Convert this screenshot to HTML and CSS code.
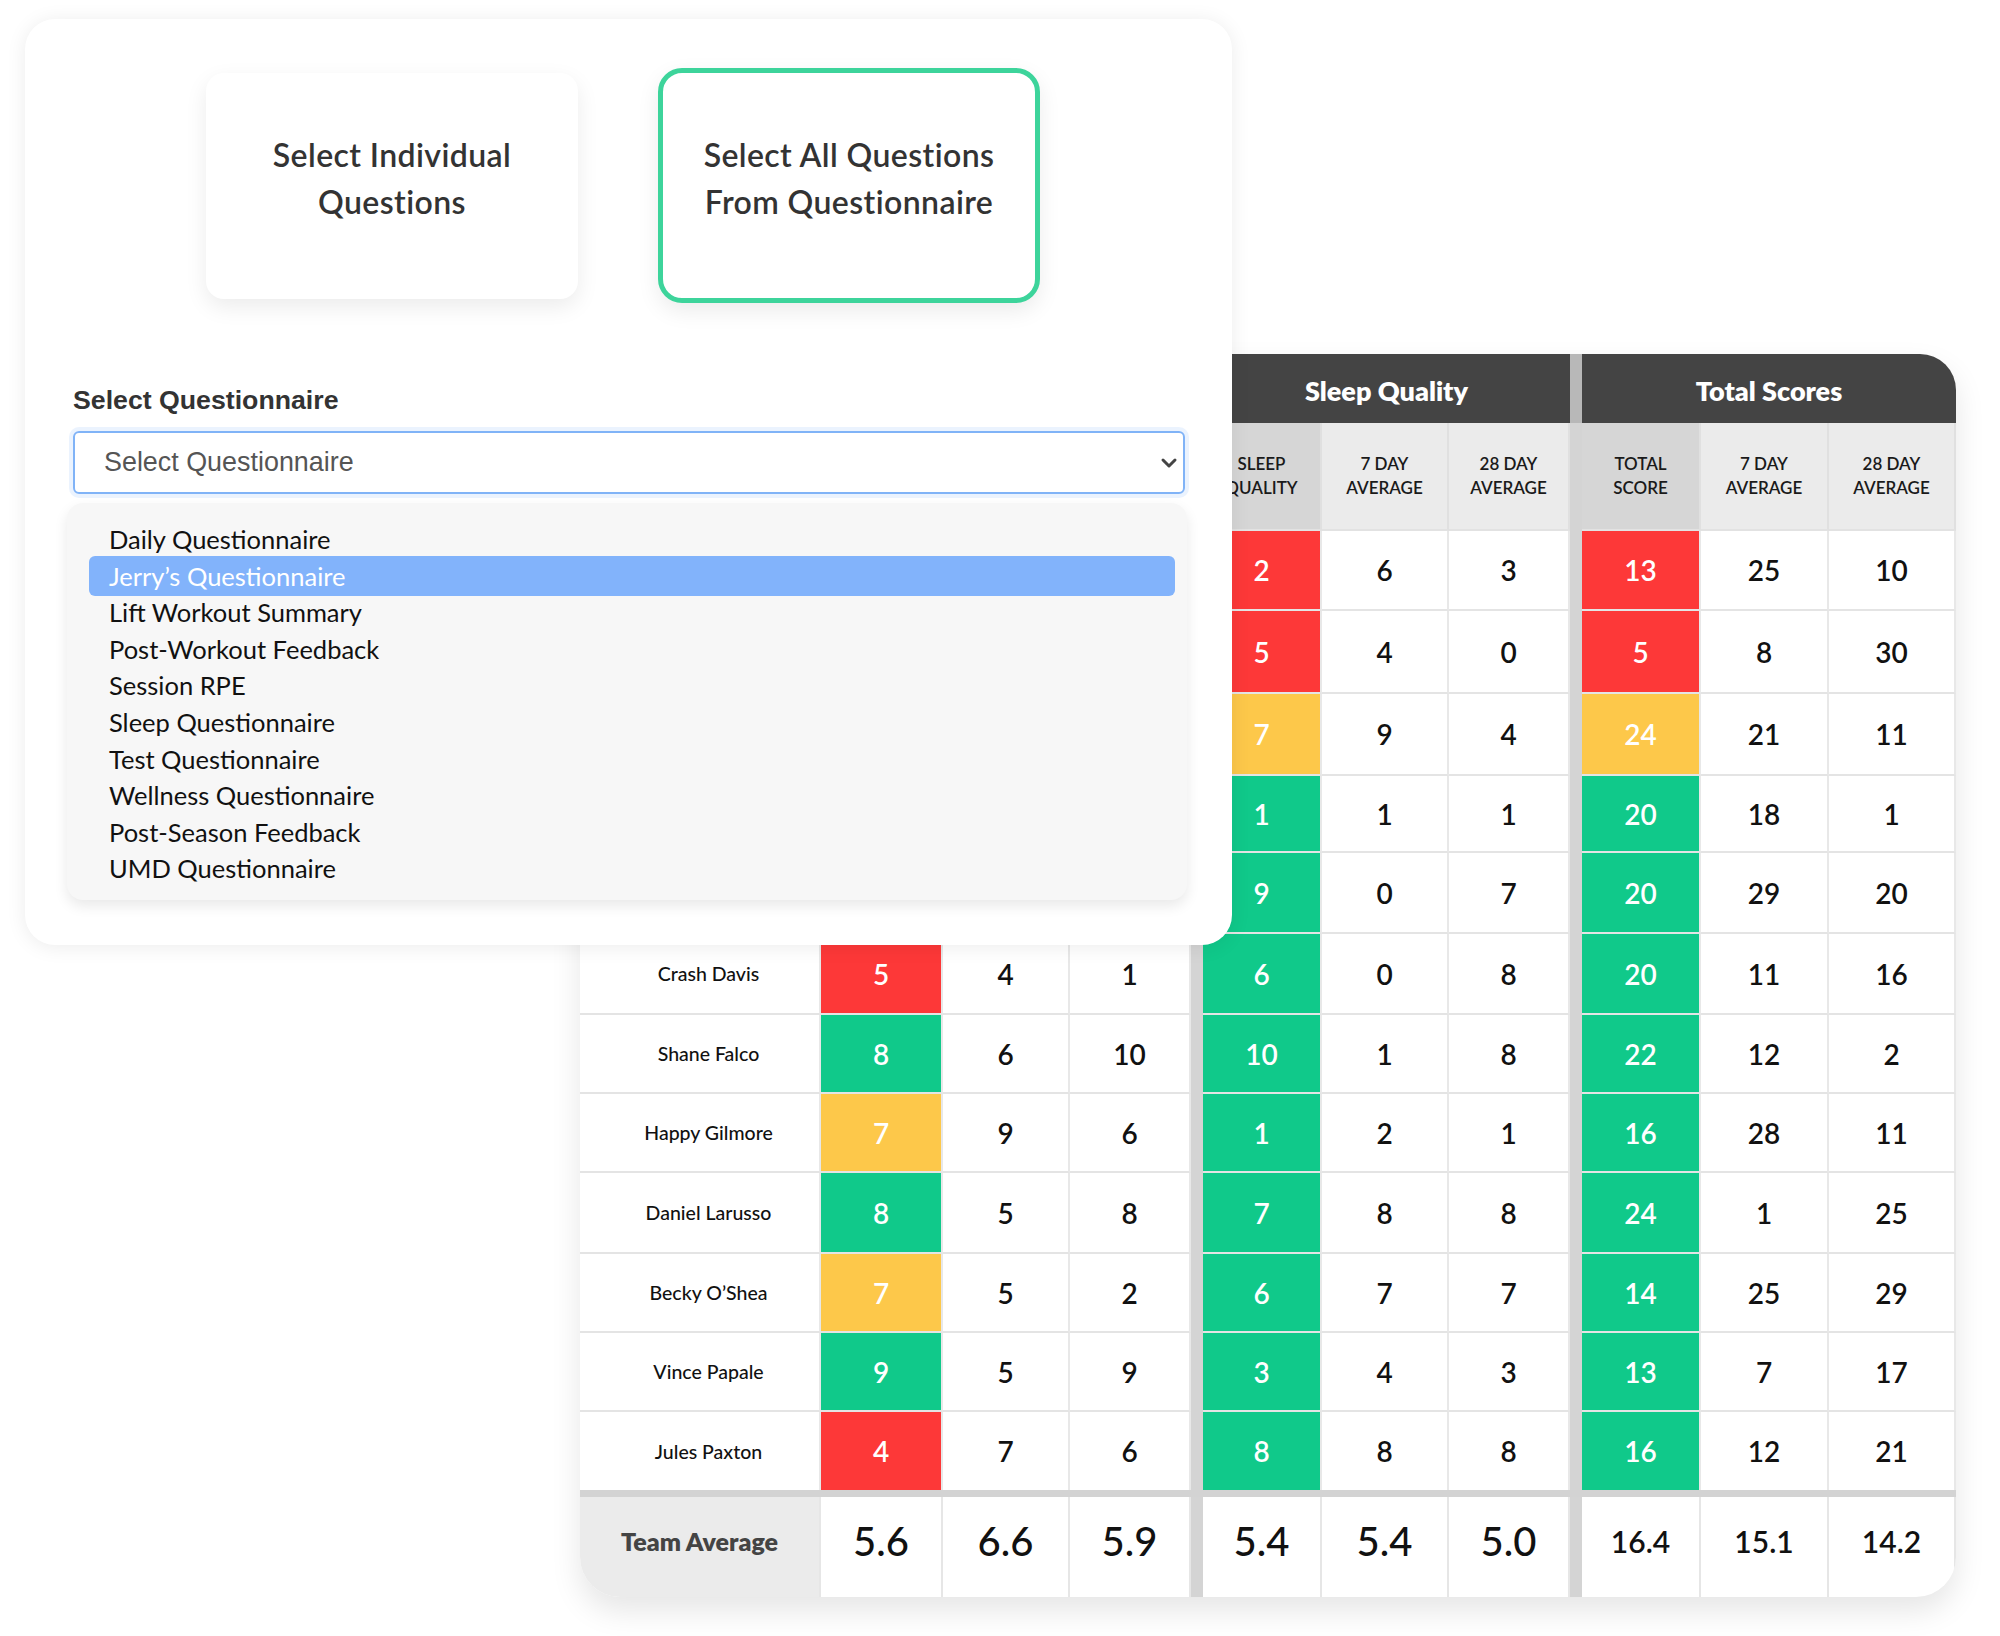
FILE: index.html
```html
<!DOCTYPE html>
<html>
<head>
<meta charset="utf-8">
<title>Questionnaire Report</title>
<link rel="stylesheet" href="styles.css">
</head>
<body>
<div class="stage">
  <div class="card">
    <div class="choices">
      <div class="choice">Select Individual<br>Questions</div>
      <div class="choice active">Select All Questions<br>From Questionnaire</div>
    </div>
    <div class="field-label">Select Questionnaire</div>
    <div class="select">
      <span>Select Questionnaire</span>
      <svg class="chev" width="18" height="12" viewBox="0 0 18 12"><path d="M3 3 L9 9 L15 3" fill="none" stroke="#444" stroke-width="3" stroke-linecap="round" stroke-linejoin="round"/></svg>
    </div>
    <ul class="options">
      <li>Daily Questionnaire</li>
      <li class="sel">Jerry’s Questionnaire</li>
      <li>Lift Workout Summary</li>
      <li>Post-Workout Feedback</li>
      <li>Session RPE</li>
      <li>Sleep Questionnaire</li>
      <li>Test Questionnaire</li>
      <li>Wellness Questionnaire</li>
      <li>Post-Season Feedback</li>
      <li>UMD Questionnaire</li>
    </ul>
  </div>

  <div class="board">
    <div class="hd"></div>
    <div class="hd span3">Readiness</div>
    <div class="sep hsep"></div>
    <div class="hd span3">Sleep Quality</div>
    <div class="sep hsep"></div>
    <div class="hd span3">Total Scores</div>

    <div class="sh">Athlete</div>
    <div class="sh first">Readiness<br>Score</div>
    <div class="sh">7 Day<br>Average</div>
    <div class="sh">28 Day<br>Average</div>
    <div class="sep"></div>
    <div class="sh first">Sleep<br>Quality</div>
    <div class="sh">7 Day<br>Average</div>
    <div class="sh">28 Day<br>Average</div>
    <div class="sep"></div>
    <div class="sh first">Total<br>Score</div>
    <div class="sh">7 Day<br>Average</div>
    <div class="sh">28 Day<br>Average</div>

    <div class="c nm">Rocky Balboa</div><div class="c y">6</div><div class="c">5</div><div class="c">7</div><div class="sep"></div><div class="c r">2</div><div class="c">6</div><div class="c">3</div><div class="sep"></div><div class="c r">13</div><div class="c">25</div><div class="c">10</div>
    <div class="c nm">Bobby Boucher</div><div class="c r">3</div><div class="c">8</div><div class="c">4</div><div class="sep"></div><div class="c r">5</div><div class="c">4</div><div class="c">0</div><div class="sep"></div><div class="c r">5</div><div class="c">8</div><div class="c">30</div>
    <div class="c nm">Roy Hobbs</div><div class="c g">9</div><div class="c">2</div><div class="c">5</div><div class="sep"></div><div class="c y">7</div><div class="c">9</div><div class="c">4</div><div class="sep"></div><div class="c y">24</div><div class="c">21</div><div class="c">11</div>
    <div class="c nm">Benny Rodriguez</div><div class="c g">8</div><div class="c">6</div><div class="c">3</div><div class="sep"></div><div class="c g">1</div><div class="c">1</div><div class="c">1</div><div class="sep"></div><div class="c g">20</div><div class="c">18</div><div class="c">1</div>
    <div class="c nm">Jimmy Chitwood</div><div class="c y">7</div><div class="c">4</div><div class="c">9</div><div class="sep"></div><div class="c g">9</div><div class="c">0</div><div class="c">7</div><div class="sep"></div><div class="c g">20</div><div class="c">29</div><div class="c">20</div>
    <div class="c nm">Crash Davis</div><div class="c r">5</div><div class="c">4</div><div class="c">1</div><div class="sep"></div><div class="c g">6</div><div class="c">0</div><div class="c">8</div><div class="sep"></div><div class="c g">20</div><div class="c">11</div><div class="c">16</div>
    <div class="c nm">Shane Falco</div><div class="c g">8</div><div class="c">6</div><div class="c">10</div><div class="sep"></div><div class="c g">10</div><div class="c">1</div><div class="c">8</div><div class="sep"></div><div class="c g">22</div><div class="c">12</div><div class="c">2</div>
    <div class="c nm">Happy Gilmore</div><div class="c y">7</div><div class="c">9</div><div class="c">6</div><div class="sep"></div><div class="c g">1</div><div class="c">2</div><div class="c">1</div><div class="sep"></div><div class="c g">16</div><div class="c">28</div><div class="c">11</div>
    <div class="c nm">Daniel Larusso</div><div class="c g">8</div><div class="c">5</div><div class="c">8</div><div class="sep"></div><div class="c g">7</div><div class="c">8</div><div class="c">8</div><div class="sep"></div><div class="c g">24</div><div class="c">1</div><div class="c">25</div>
    <div class="c nm">Becky O’Shea</div><div class="c y">7</div><div class="c">5</div><div class="c">2</div><div class="sep"></div><div class="c g">6</div><div class="c">7</div><div class="c">7</div><div class="sep"></div><div class="c g">14</div><div class="c">25</div><div class="c">29</div>
    <div class="c nm">Vince Papale</div><div class="c g">9</div><div class="c">5</div><div class="c">9</div><div class="sep"></div><div class="c g">3</div><div class="c">4</div><div class="c">3</div><div class="sep"></div><div class="c g">13</div><div class="c">7</div><div class="c">17</div>
    <div class="c nm last">Jules Paxton</div><div class="c r last">4</div><div class="c last">7</div><div class="c last">6</div><div class="sep"></div><div class="c g last">8</div><div class="c last">8</div><div class="c last">8</div><div class="sep"></div><div class="c g last">16</div><div class="c last">12</div><div class="c last">21</div>

    <div class="rule"></div>

    <div class="ft nm">Team Average</div>
    <div class="ft">5.6</div><div class="ft">6.6</div><div class="ft">5.9</div>
    <div class="sep"></div>
    <div class="ft">5.4</div><div class="ft">5.4</div><div class="ft">5.0</div>
    <div class="sep"></div>
    <div class="ft sm">16.4</div><div class="ft sm">15.1</div><div class="ft sm">14.2</div>
  </div>
</div>
</body>
</html>
```
FILE: styles.css
```css
* { box-sizing: border-box; margin: 0; padding: 0; }
html, body { background: #fff; }
body {
  font-family: Lato, "Noto Sans", sans-serif;
  width: 2000px;
  height: 1636px;
  overflow: hidden;
}
.stage {
  position: relative;
  height: 1636px;
  padding: 354px 0 0 580px;
}

/* ---------- top card ---------- */
.card {
  position: absolute;
  left: 25px;
  top: 19px;
  width: 1207px;
  height: 926px;
  background: #fff;
  border-radius: 30px;
  box-shadow: 0 2px 20px rgba(0, 0, 0, 0.08);
  z-index: 2;
  padding: 49px 0 0 48px;
}
.choices {
  display: flex;
  align-items: center;
  gap: 80px;
  height: 235px;
  padding-left: 133px;
}
.choice {
  width: 372px;
  height: 226px;
  border-radius: 18px;
  background: #fff;
  box-shadow: 0 8px 22px rgba(0, 0, 0, 0.08);
  display: flex;
  align-items: center;
  justify-content: center;
  text-align: center;
  padding-bottom: 15px;
  font-size: 32px;
  letter-spacing: 0.4px;
  line-height: 47px;
  font-weight: 600;
  color: #333;
}
.choice.active {
  width: 382px;
  height: 235px;
  border: 5px solid #3dd49b;
  border-radius: 24px;
}
.field-label {
  margin-top: 81px;
  font-family: "Liberation Sans", Arial, sans-serif;
  font-weight: 700;
  font-size: 26.7px;
  line-height: 32px;
  color: #333;
}
.select {
  margin-top: 15px;
  width: 1112px;
  height: 63px;
  border: 2px solid #80b3f7;
  border-radius: 6px;
  box-shadow: 0 0 0 4px rgba(128, 179, 247, 0.16);
  display: flex;
  align-items: center;
  justify-content: space-between;
  padding: 0 5px 0 29px;
  font-family: "Liberation Sans", Arial, sans-serif;
  font-size: 26.9px;
  color: #555;
}
.options {
  list-style: none;
  margin: 9px 0 0 -6px;
  width: 1120px;
  height: 397px;
  background: #f7f7f7;
  border-radius: 16px;
  box-shadow: 0 6px 14px rgba(0, 0, 0, 0.09);
  padding: 18px 12px 0 22px;
}
.options li {
  height: 36.6px;
  line-height: 36.6px;
  padding-left: 20px;
  font-size: 25.5px;
  color: #111;
}
.options li.sel {
  height: 40px;
  line-height: 40px;
  margin: -1.7px 0;
  background: #82b3fb;
  color: #fff;
  border-radius: 6px;
}

/* ---------- score table ---------- */
.board {
  width: 1376px;
  display: grid;
  grid-template-columns: 241px 122px 127px 121px 12px 119px 127px 121px 12px 119px 128px 127px;
  grid-template-rows: 69px 108px 80px 83px 82px 77px 81px 81px 79px 79px 81px 79px 79px 78px 7px 100px;
  border-radius: 40px 36px 40px 40px;
  overflow: hidden;
  background: #fff;
  box-shadow: 0 14px 30px rgba(0, 0, 0, 0.1);
}
.hd {
  background: #444;
  color: #fff;
  font-weight: 800;
  font-size: 27px;
  display: flex;
  align-items: center;
  justify-content: center;
  padding-top: 3px;
}
.span3 { grid-column: span 3; }
.sep { background: #d4d4d4; }
.hsep { background: #b8b8b8; }
.sh {
  background: #ebebeb;
  border-right: 2px solid #e0e0e0;
  border-bottom: 2px solid #e2e2e2;
  display: flex;
  align-items: center;
  justify-content: center;
  text-align: center;
  text-transform: uppercase;
  font-size: 17px;
  line-height: 24px;
  font-weight: 600;
  color: #1a1a1a;
}
.sh.first { background: #d6d6d6; }
.c {
  display: flex;
  align-items: center;
  justify-content: center;
  font-size: 28px;
  font-weight: 600;
  color: #111;
  border-right: 2px solid #e8e8e8;
  border-bottom: 2px solid #e4e4e4;
}
.c.last { border-bottom: none; }
.c.nm {
  font-size: 19.5px;
  font-weight: 500;
  padding-left: 18px;
}
.c.r { background: #fd3838; color: #fff; }
.c.y { background: #fdc84a; color: #fff; }
.c.g { background: #10c98a; color: #fff; }
.rule { grid-column: 1 / -1; background: #d3d3d3; }
.ft {
  display: flex;
  align-items: center;
  justify-content: center;
  padding-bottom: 12px;
  font-size: 40px;
  font-weight: 500;
  color: #111;
  border-right: 2px solid #e6e6e6;
}
.ft.nm {
  background: #ebebeb;
  font-size: 25px;
  font-weight: 800;
  color: #444;
}
.ft.sm {
  font-size: 30px;
  font-weight: 600;
}
```
